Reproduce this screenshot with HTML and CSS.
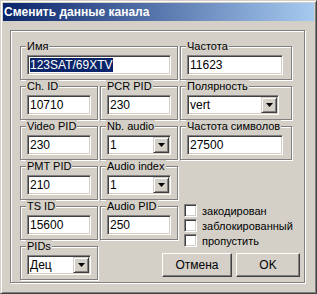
FILE: index.html
```html
<!DOCTYPE html>
<html lang="ru">
<head>
  <meta charset="UTF-8">
  <title>Сменить данные канала</title>
  <link rel="stylesheet" href="styles.css">
</head>
<body>
  <div class="window">
    <div class="titlebar">Сменить данные канала</div>
    <div class="panel">
      <div class="grid">
        <!-- row 1 -->
        <div class="group c1 span2">
          <span class="caption">Имя</span>
          <div class="field w-name"><span class="sel">123SAT/69XTV</span></div>
        </div>
        <div class="group c3">
          <span class="caption">Частота</span>
          <div class="field w-lg">11623</div>
        </div>
        <!-- row 2 -->
        <div class="group c1">
          <span class="caption">Ch. ID</span>
          <div class="field w-sm">10710</div>
        </div>
        <div class="group">
          <span class="caption">PCR PID</span>
          <div class="field w-sm">230</div>
        </div>
        <div class="group c3">
          <span class="caption">Полярность</span>
          <div class="field select w-sel">
            <span class="val">vert</span>
            <span class="drop"><svg width="7" height="4" viewBox="0 0 7 4"><polygon points="0,0 7,0 3.5,4" fill="#000"/></svg></span>
          </div>
        </div>
        <!-- row 3 -->
        <div class="group c1">
          <span class="caption">Video PID</span>
          <div class="field w-sm">230</div>
        </div>
        <div class="group">
          <span class="caption">Nb. audio</span>
          <div class="field select w-sm">
            <span class="val">1</span>
            <span class="drop"><svg width="7" height="4" viewBox="0 0 7 4"><polygon points="0,0 7,0 3.5,4" fill="#000"/></svg></span>
          </div>
        </div>
        <div class="group c3">
          <span class="caption">Частота символов</span>
          <div class="field w-lg">27500</div>
        </div>
        <!-- row 4 -->
        <div class="group c1">
          <span class="caption">PMT PID</span>
          <div class="field w-sm">210</div>
        </div>
        <div class="group">
          <span class="caption">Audio index</span>
          <div class="field select w-sm">
            <span class="val">1</span>
            <span class="drop"><svg width="7" height="4" viewBox="0 0 7 4"><polygon points="0,0 7,0 3.5,4" fill="#000"/></svg></span>
          </div>
        </div>
        <!-- row 5 -->
        <div class="group c1">
          <span class="caption">TS ID</span>
          <div class="field w-sm">15600</div>
        </div>
        <div class="group">
          <span class="caption">Audio PID</span>
          <div class="field w-sm">250</div>
        </div>
        <div class="checks">
          <label class="check"><span class="box"></span>закодирован</label>
          <label class="check"><span class="box"></span>заблокированный</label>
          <label class="check"><span class="box"></span>пропустить</label>
        </div>
        <!-- row 6 -->
        <div class="group c1">
          <span class="caption">PIDs</span>
          <div class="field select w-sm">
            <span class="val">Дец</span>
            <span class="drop"><svg width="7" height="4" viewBox="0 0 7 4"><polygon points="0,0 7,0 3.5,4" fill="#000"/></svg></span>
          </div>
        </div>
        <div class="buttons">
          <button class="btn cancel">Отмена</button>
          <button class="btn ok">OK</button>
        </div>
      </div>
    </div>
  </div>
</body>
</html>
```

FILE: styles.css
```css
body {
  margin: 0;
  background-color: #d4d0c8;
  font-family: "Liberation Sans", Arial, sans-serif;
  font-size: 11px;
  color: #000;
}
/* Outer dialog window with raised 3D edge */
.window {
  width: 317px;
  height: 294px;
  box-sizing: border-box;
  background-color: #d4d0c8;
  border: 1px solid;
  border-color: #d4d0c8 #404040 #404040 #d4d0c8;
  box-shadow: inset 1px 1px 0 #fff, inset -1px -1px 0 #808080;
  padding: 2px;
}
.titlebar {
  height: 18px;
  line-height: 18px;
  padding-left: 1px;
  background: linear-gradient(to right, #0a246a, #a6caf0);
  color: #fff;
  font-weight: bold;
  font-size: 12px;
  white-space: nowrap;
}
/* Etched frame around all the fields */
.panel {
  margin: 9px 0 0 7px;
  width: 295px;
  height: 253px;
  box-sizing: border-box;
  border: 1px solid #808080;
  box-shadow: 1px 1px 0 #fff, inset 1px 1px 0 #fff;
  padding: 15px 0 0 9px;
}
.grid {
  display: grid;
  grid-template-columns: 78px 78px 112px 6px;
  grid-template-rows: repeat(6, 40px);
  column-gap: 2px;
}
/* Group box with caption sitting on its top line */
.group {
  height: 34px;
  box-sizing: border-box;
  border: 1px solid #808080;
  box-shadow: 1px 1px 0 #fff, inset 1px 1px 0 #fff;
}
.c1 { grid-column: 1; }
.c3 { grid-column: 3; }
.span2 { grid-column: 1 / 3; }
.caption {
  display: block;
  width: max-content;
  height: 13px;
  line-height: 13px;
  margin: -7px 0 0 5px;
  padding: 0 1px;
  background-color: #d4d0c8;
  white-space: nowrap;
}
/* Sunken edit box */
.field {
  margin: 2px 0 0 6px;
  height: 20px;
  box-sizing: border-box;
  border: 1px solid;
  border-color: #808080 #fff #fff #808080;
  box-shadow: inset 1px 1px 0 #404040, inset -1px -1px 0 #d4d0c8;
  background-color: #fff;
  padding-left: 2px;
  line-height: 18px;
  font-size: 12px;
  white-space: nowrap;
  overflow: hidden;
}
.w-sm { width: 64px; }
.w-name { width: 144px; }
.w-lg { width: 96px; }
.w-sel { width: 92px; }
.sel {
  background-color: #0a246a;
  color: #fff;
}
/* Combo box */
.select {
  display: flex;
  padding: 1px;
}
.select .val {
  flex: 1;
  padding-left: 1px;
  line-height: 16px;
}
.drop {
  width: 16px;
  height: 16px;
  box-sizing: border-box;
  border: 1px solid;
  border-color: #d4d0c8 #404040 #404040 #d4d0c8;
  box-shadow: inset 1px 1px 0 #fff, inset -1px -1px 0 #808080;
  background-color: #d4d0c8;
  display: flex;
  align-items: center;
  justify-content: center;
}
.drop svg {
  display: block;
}
/* Check boxes on the right */
.checks {
  grid-column: 3 / 5;
  display: flex;
  flex-direction: column;
  gap: 2px;
  margin: -2px 0 0 4px;
}
.check {
  display: flex;
  align-items: center;
  gap: 5px;
  height: 13px;
  font-size: 11px;
  white-space: nowrap;
}
.box {
  width: 13px;
  height: 13px;
  flex: none;
  box-sizing: border-box;
  border: 1px solid;
  border-color: #808080 #fff #fff #808080;
  box-shadow: inset 1px 1px 0 #404040, inset -1px -1px 0 #d4d0c8;
  background-color: #fff;
}
.buttons {
  grid-column: 2 / 5;
  display: flex;
  justify-content: flex-end;
  gap: 4px;
  margin-top: 7px;
  align-self: start;
}
.btn {
  height: 24px;
  padding: 0;
  border: 1px solid;
  border-color: #fff #404040 #404040 #fff;
  box-shadow: inset -1px -1px 0 #808080, inset 1px 1px 0 #d4d0c8;
  background-color: #d4d0c8;
  font-family: "Liberation Sans", Arial, sans-serif;
  font-size: 12px;
  color: #000;
}
.cancel { width: 70px; }
.ok { width: 64px; }
```
